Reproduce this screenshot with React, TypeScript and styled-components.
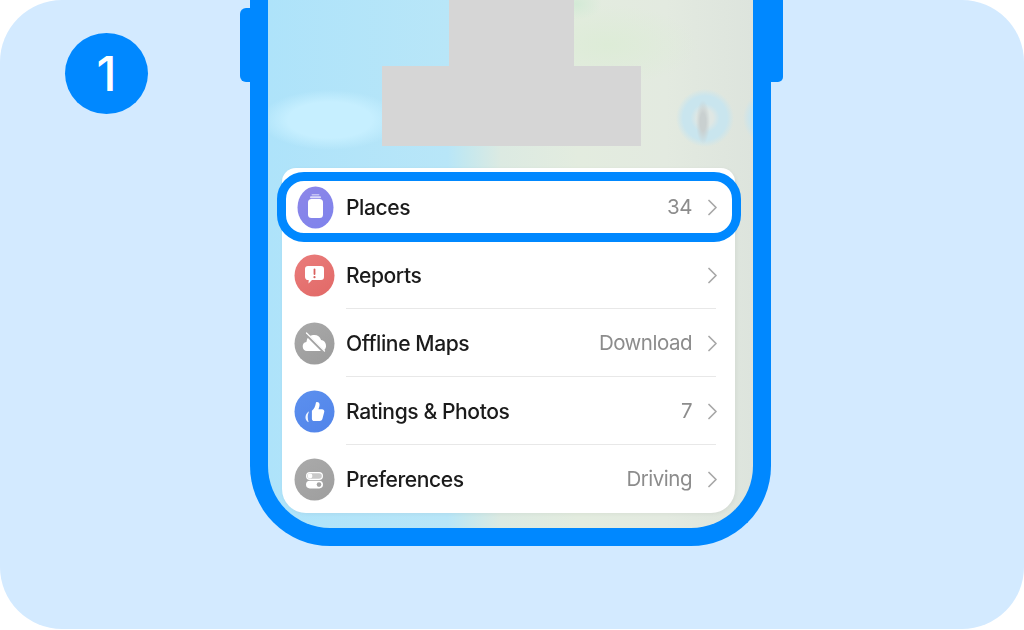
import React from "react";
import styled, { createGlobalStyle } from "styled-components";

const Global = createGlobalStyle`
  html, body { margin: 0; padding: 0; background: #fff; }
  #root { width: 1024px; height: 630px; overflow: hidden; }
`;

const Card = styled.div`
  display: flex;
  align-items: flex-start;
  width: 1024px;
  height: 629px;
  box-sizing: border-box;
  padding-left: 65px;
  background: #d3eaff;
  border-radius: 62px;
  overflow: hidden;
`;

const StepBadge = styled.div`
  flex: none;
  width: 83px;
  height: 81px;
  margin: 33px 102px 0 0;
  border-radius: 50%;
  background: #0088ff;
  color: #fff;
  font: 500 48px/81px Inter, "Liberation Sans", sans-serif;
  text-align: center;
`;

const PhoneWrap = styled.div`
  position: relative;
  flex: none;
  width: 521px;
  height: 546px;
`;

const SideButton = styled.div<{ $side: "left" | "right" }>`
  position: absolute;
  top: ${(p) => (p.$side === "left" ? "8px" : "-10px")};
  height: ${(p) => (p.$side === "left" ? "74px" : "92px")};
  ${(p) => (p.$side === "left" ? "left: -10px;" : "right: -12px;")}
  width: 20px;
  background: #0088ff;
  border-radius: ${(p) => (p.$side === "left" ? "6px 0 0 6px" : "0 5px 5px 0")};
`;

const Phone = styled.div`
  position: relative;
  box-sizing: border-box;
  width: 521px;
  height: 546px;
  border: 18px solid #0088ff;
  border-top: 0;
  border-radius: 0 0 80px 80px;
  overflow: hidden;
  background:
    radial-gradient(ellipse 7px 22px at 435px 122px, #c9d0d0 0 40%, rgba(201, 208, 208, 0) 100%),
    radial-gradient(ellipse 70px 30px at 62px 120px, #c6efff 0 60%, rgba(198, 239, 255, 0) 100%),
    radial-gradient(circle 29px at 437px 118px, #dfe7e4 0 28%, #c9e5ee 50% 76%, rgba(201, 229, 238, 0) 100%),
    radial-gradient(circle 29px at 504px 118px, #dfe7e4 0 28%, #c9e5ee 50% 76%, rgba(201, 229, 238, 0) 100%),
    radial-gradient(ellipse 26px 16px at 308px 4px, #d3ead6 0, rgba(211, 234, 214, 0) 100%),
    radial-gradient(ellipse 90px 40px at 340px 45px, #ddecd7 0, rgba(221, 236, 215, 0) 100%),
    linear-gradient(90deg, #aee3fa 0%, #b8e6f8 37%, #c5e8ee 41%, #dceae2 48%, #e3ecdf 64%, #e3eae0 82%, #dde4dd 100%);
  display: flex;
  flex-direction: column;
  align-items: flex-start;
`;

const Redaction = styled.div`
  display: flex;
  flex-direction: column;
  align-items: center;
  width: 259px;
  margin-left: 114px;
`;

const RedactTop = styled.div`
  width: 125px;
  height: 66px;
  background: #d6d6d6;
`;

const RedactBottom = styled.div`
  width: 259px;
  height: 80px;
  background: #d6d6d6;
`;

const List = styled.div`
  position: relative;
  box-sizing: border-box;
  width: 453px;
  height: 345px;
  margin: 22px 0 0 14px;
  padding-top: 5px;
  background: #fff;
  border-radius: 14px 14px 24px 24px;
  box-shadow: 1px 1px 4px rgba(0, 0, 0, 0.05);
`;

const Row = styled.div`
  display: flex;
  align-items: center;
  height: 68px;
  padding: 0 19px 0 12px;
`;

const IconHolder = styled.div`
  width: 41px;
  height: 43px;
  flex: none;
  margin-right: 11px;
  filter: blur(0.35px);
  svg { display: block; }
`;

const RowBody = styled.div<{ $divided: boolean }>`
  flex: 1;
  display: flex;
  align-items: center;
  box-sizing: border-box;
  height: 100%;
  padding-top: 2px;
  border-bottom: 1px solid ${(p) => (p.$divided ? "#e8e8e8" : "transparent")};
`;

const Label = styled.span`
  flex: 1;
  font: 500 21.1px/1 Inter, "Liberation Sans", sans-serif;
  letter-spacing: -0.42px;
  color: #1b1b1b;
  filter: blur(0.25px);
`;

const Value = styled.span`
  font: 400 20.5px/1 Inter, "Liberation Sans", sans-serif;
  letter-spacing: -0.5px;
  color: #8c8c8c;
  filter: blur(0.25px);
`;

const Chevron = styled.svg`
  flex: none;
  margin: 0 -1px 0 16px;
  width: 9px;
  height: 17px;
`;

const Highlight = styled.div`
  position: absolute;
  left: -5px;
  right: -6px;
  top: 4px;
  height: 70px;
  box-sizing: border-box;
  border: 9px solid #0088ff;
  border-radius: 27px;
  pointer-events: none;
`;

type IconProps = { id: string; from: string; to: string; rx?: number; children: React.ReactNode };
const Disc = ({ id, from, to, rx = 20, children }: IconProps) => (
  <svg width="41" height="43" viewBox="0 0 41 43">
    <defs>
      <linearGradient id={id} x1="0.2" y1="0" x2="0.8" y2="1">
        <stop offset="0" stopColor={from} />
        <stop offset="1" stopColor={to} />
      </linearGradient>
    </defs>
    <ellipse cx={rx < 20 ? 21.5 : 20.5} cy="21.5" rx={rx} ry="21" fill={`url(#${id})`} />
    {children}
  </svg>
);

const PlacesIcon = () => (
  <Disc id="g1" from="#8c86e8" to="#7f83ec" rx={18}>
    <rect x="17.5" y="8" width="8" height="1.6" rx="0.8" fill="#fff" opacity=".5" />
    <rect x="16" y="10.2" width="11" height="2" rx="1" fill="#fff" opacity=".7" />
    <rect x="14" y="13" width="15" height="19" rx="3.5" fill="#fff" />
  </Disc>
);
const ReportsIcon = () => (
  <Disc id="g2" from="#e97b7a" to="#e26a68">
    <path d="M14 12h13a3 3 0 0 1 3 3v8a3 3 0 0 1-3 3h-9l-3.500 3.500.2-3.500a3 3 0 0 1-3.700-3v-8a3 3 0 0 1 3-3z" fill="#fff" />
    <rect x="19.600" y="14.500" width="1.800" height="6.500" rx="0.900" fill="#d9605e" />
    <circle cx="20.500" cy="23.200" r="1.100" fill="#d9605e" />
  </Disc>
);
const OfflineIcon = () => (
  <Disc id="g3" from="#a8a8a8" to="#9c9c9c">
    <path d="M13 29a4.600 4.600 0 0 1-.6-9.100 7.600 7.600 0 0 1 14.700-2 6 6 0 0 1 1.900 11.100z" fill="#fff" />
    <path d="M11.500 11.500l18 18" stroke="#a3a3a3" strokeWidth="3" />
    <path d="M12.500 11l18 18" stroke="#fff" strokeWidth="1.300" strokeLinecap="round" />
  </Disc>
);
const ThumbIcon = () => (
  <Disc id="g4" from="#5b8fee" to="#5285ea">
    <g transform="translate(1.800 1.500) scale(0.92)">
      <path d="M17.500 21c2.400-2.200 3.800-5 4.300-8.600.2-1.400 3.800-1.200 4 1.500.1 1.900-.5 3.800-1.200 5.300h3.800c2 0 3 1.600 2.500 3.200l-2 7.500c-.4 1.400-1.500 2.100-2.900 2.100h-6c-1.400 0-2.500-1-2.500-2.500z" fill="#fff" />
      <path d="M14.500 21.500c-2.700 1.800-4 4.200-4 6.500 0 2.500 1.300 4.500 3.500 5.500-.6-1.800-1-3.700-1-5.700 0-2.300.6-4.300 1.500-6.300z" fill="#fff" opacity=".9" />
    </g>
  </Disc>
);
const PrefsIcon = () => (
  <Disc id="g5" from="#a9a9a9" to="#9f9f9f">
    <rect x="12.600" y="14.600" width="15.800" height="6.800" rx="3.400" fill="#c9c9c9" stroke="#fff" strokeWidth="1.200" />
    <circle cx="16" cy="18" r="2.400" fill="#fff" />
    <rect x="12" y="22.800" width="17" height="7.600" rx="3.800" fill="#fff" />
    <circle cx="25" cy="26.600" r="2.300" fill="#a3a3a3" />
  </Disc>
);

const Arrow = () => (
  <Chevron viewBox="0 0 9 17">
    <path d="M1 1.500l7 7-7 7" fill="none" stroke="#a8a8a8" strokeWidth="1.700" strokeLinecap="round" strokeLinejoin="round" />
  </Chevron>
);

const rows = [
  { label: "Places", value: "34", icon: <PlacesIcon /> },
  { label: "Reports", value: "", icon: <ReportsIcon /> },
  { label: "Offline Maps", value: "Download", icon: <OfflineIcon /> },
  { label: "Ratings & Photos", value: "7", icon: <ThumbIcon /> },
  { label: "Preferences", value: "Driving", icon: <PrefsIcon /> },
];

export default function App() {
  return (
    <>
      <Global />
      <Card>
        <StepBadge>1</StepBadge>
        <PhoneWrap>
          <SideButton $side="left" />
          <SideButton $side="right" />
          <Phone>
            <Redaction>
              <RedactTop />
              <RedactBottom />
            </Redaction>
            <List>
              {rows.map((r, i) => (
                <Row key={r.label}>
                  <IconHolder>{r.icon}</IconHolder>
                  <RowBody $divided={i > 0 && i < 4}>
                    <Label>{r.label}</Label>
                    {r.value && <Value>{r.value}</Value>}
                    <Arrow />
                  </RowBody>
                </Row>
              ))}
              <Highlight />
            </List>
          </Phone>
        </PhoneWrap>
      </Card>
    </>
  );
}
